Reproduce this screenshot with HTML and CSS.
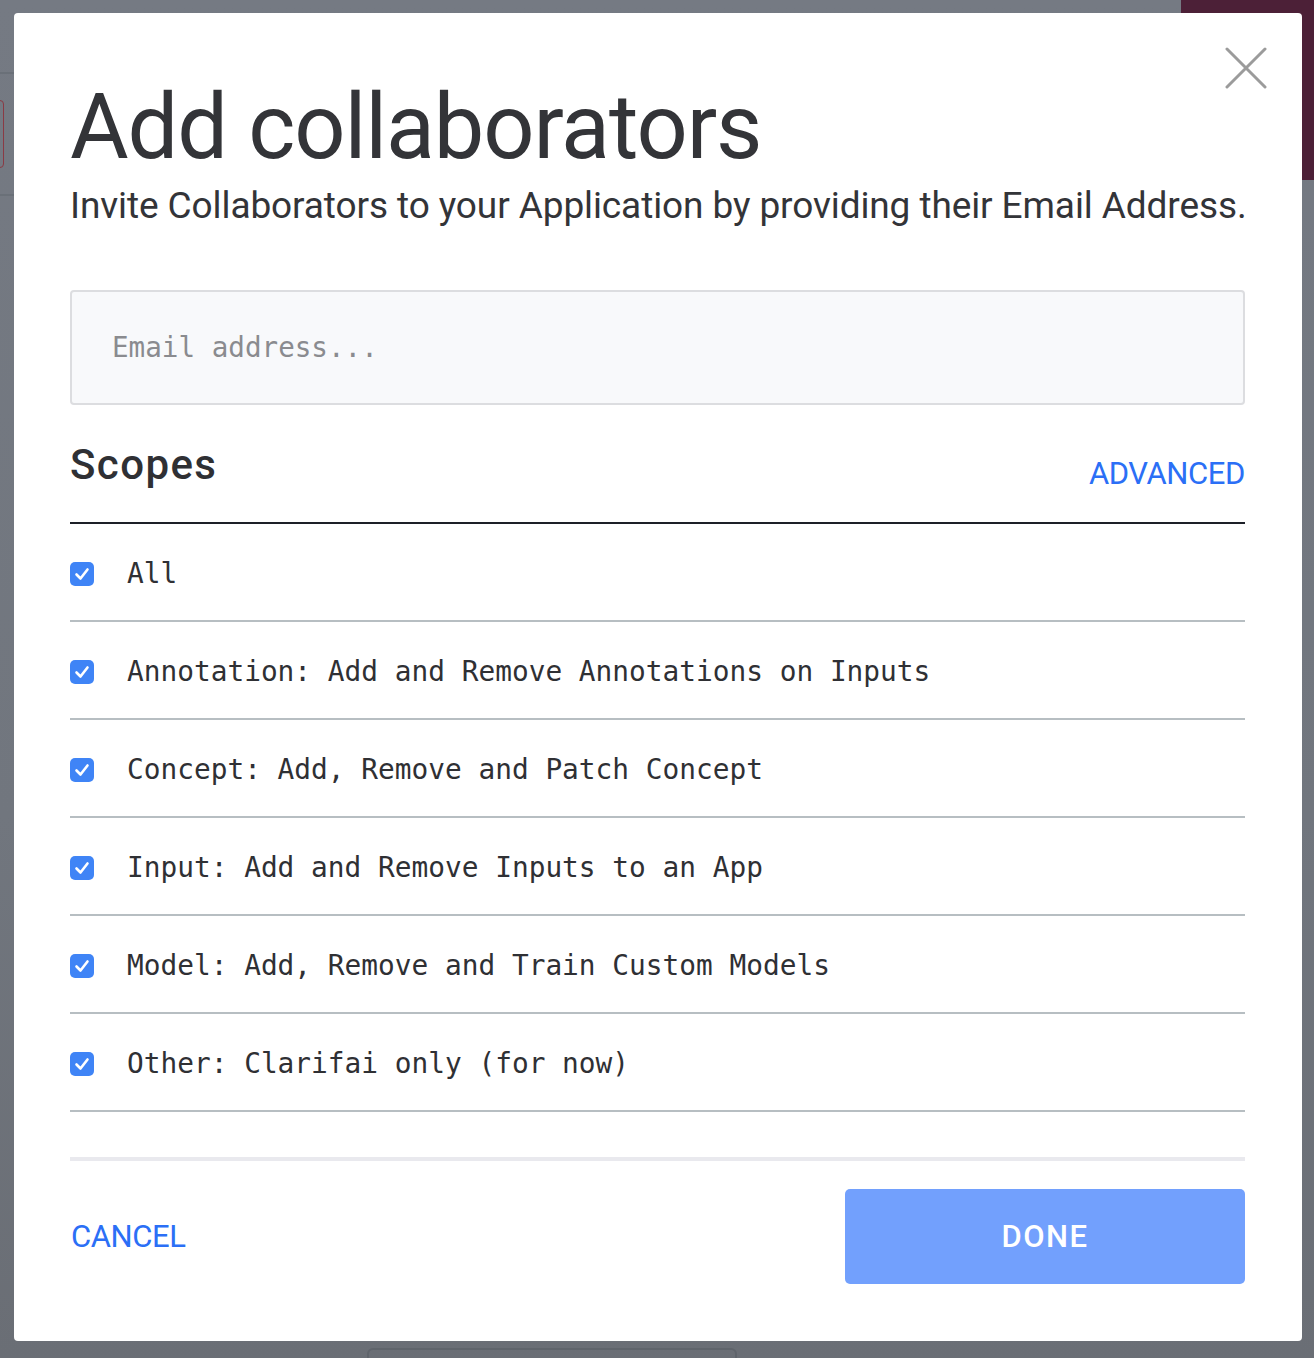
FILE: index.html
```html
<!DOCTYPE html>
<html>
<head>
<meta charset="utf-8">
<link rel="stylesheet" href="styles.css">
</head>
<body>
<div class="backdrop">
  <div class="bg-maroon"></div>
  <div class="bg-line bg-line-1"></div>
  <div class="bg-line bg-line-2"></div>
  <div class="bg-redbox"></div>
  <div class="bg-bottombox"></div>
</div>
<div class="modal">
  <button class="close" aria-label="Close">
    <svg width="42" height="42" viewBox="0 0 42 42"><path d="M2 2 L40 40 M40 2 L2 40" stroke="#9b9b9b" stroke-width="3" stroke-linecap="round" fill="none"/></svg>
  </button>
  <h1 class="title">Add collaborators</h1>
  <p class="subtitle">Invite Collaborators to your Application by providing their Email Address.</p>
  <input class="email" type="text" placeholder="Email address...">
  <div class="scopes-head">
    <h2 class="scopes-title">Scopes</h2>
    <a class="link advanced">ADVANCED</a>
  </div>
  <ul class="scopes">
    <li class="scope"><span class="check"><svg width="24" height="24" viewBox="0 0 24 24"><path d="M6.5 12.5 L10.5 16.5 L17.5 7.5" stroke="#fff" stroke-width="2.6" stroke-linecap="round" stroke-linejoin="round" fill="none"/></svg></span><span class="label">All</span></li>
    <li class="scope"><span class="check"><svg width="24" height="24" viewBox="0 0 24 24"><path d="M6.5 12.5 L10.5 16.5 L17.5 7.5" stroke="#fff" stroke-width="2.6" stroke-linecap="round" stroke-linejoin="round" fill="none"/></svg></span><span class="label">Annotation: Add and Remove Annotations on Inputs</span></li>
    <li class="scope"><span class="check"><svg width="24" height="24" viewBox="0 0 24 24"><path d="M6.5 12.5 L10.5 16.5 L17.5 7.5" stroke="#fff" stroke-width="2.6" stroke-linecap="round" stroke-linejoin="round" fill="none"/></svg></span><span class="label">Concept: Add, Remove and Patch Concept</span></li>
    <li class="scope"><span class="check"><svg width="24" height="24" viewBox="0 0 24 24"><path d="M6.5 12.5 L10.5 16.5 L17.5 7.5" stroke="#fff" stroke-width="2.6" stroke-linecap="round" stroke-linejoin="round" fill="none"/></svg></span><span class="label">Input: Add and Remove Inputs to an App</span></li>
    <li class="scope"><span class="check"><svg width="24" height="24" viewBox="0 0 24 24"><path d="M6.5 12.5 L10.5 16.5 L17.5 7.5" stroke="#fff" stroke-width="2.6" stroke-linecap="round" stroke-linejoin="round" fill="none"/></svg></span><span class="label">Model: Add, Remove and Train Custom Models</span></li>
    <li class="scope"><span class="check"><svg width="24" height="24" viewBox="0 0 24 24"><path d="M6.5 12.5 L10.5 16.5 L17.5 7.5" stroke="#fff" stroke-width="2.6" stroke-linecap="round" stroke-linejoin="round" fill="none"/></svg></span><span class="label">Other: Clarifai only (for now)</span></li>
  </ul>
  <div class="footer-rule"></div>
  <div class="footer">
    <a class="link cancel">CANCEL</a>
    <button class="done">DONE</button>
  </div>
</div>
</body>
</html>
```
FILE: styles.css
```css
html, body {
  margin: 0;
  padding: 0;
}
body {
  background: #72777f;
  width: 1314px;
  height: 1358px;
  overflow: hidden;
  position: relative;
  font-family: Roboto, "Noto Sans", sans-serif;
  color: #323338;
}
.backdrop {
  position: absolute;
  inset: 0;
  background: linear-gradient(180deg, #757a83 0%, #71767e 60%, #6a6e75 100%);
}
.bg-maroon {
  position: absolute;
  left: 1181px;
  top: 0;
  width: 133px;
  height: 180px;
  background: #4c2037;
}
.bg-line {
  position: absolute;
  left: 0;
  width: 14px;
  height: 2px;
  background: #6a7078;
}
.bg-line-1 { top: 72px; }
.bg-line-2 { top: 194px; }
.bg-redbox {
  position: absolute;
  left: -6px;
  top: 100px;
  width: 8px;
  height: 66px;
  border: 1px solid #8a3a44;
  border-radius: 4px;
}
.bg-bottombox {
  position: absolute;
  left: 367px;
  top: 1348px;
  width: 366px;
  height: 30px;
  border: 2px solid #5f646b;
  border-radius: 6px;
}
.modal {
  position: absolute;
  left: 14px;
  top: 13px;
  width: 1288px;
  box-sizing: border-box;
  padding: 70px 57px 57px 56px;
  background: #fff;
  border-radius: 4px;
}
.close {
  position: absolute;
  right: 35px;
  top: 34px;
  width: 42px;
  height: 42px;
  padding: 0;
  border: 0;
  background: none;
}
.close svg { display: block; }
.title {
  margin: 0;
  font-family: Roboto, sans-serif;
  font-weight: 400;
  font-size: 90px;
  line-height: 90px;
  color: #333438;
  letter-spacing: -1.1px;
  white-space: nowrap;
}
.subtitle {
  margin: 14px 0 0;
  font-size: 37px;
  line-height: 37px;
  color: #333438;
  letter-spacing: -0.1px;
  white-space: nowrap;
}
.email {
  display: block;
  box-sizing: border-box;
  width: 100%;
  height: 115px;
  margin: 66px 0 0;
  padding: 0 40px;
  background: #f8f9fb;
  border: 2px solid #dcdde0;
  border-radius: 4px;
  font-family: "DejaVu Sans Mono", monospace;
  font-size: 27.6px;
  color: #333;
  outline: none;
}
.email::placeholder {
  color: #8a8b8f;
}
.scopes-head {
  display: flex;
  justify-content: space-between;
  align-items: flex-end;
  margin-top: 39px;
  padding-bottom: 36px;
  border-bottom: 2px solid #1d2028;
}
.scopes-title {
  margin: 0;
  font-size: 42px;
  line-height: 42px;
  font-weight: 500;
  color: #2f3034;
  letter-spacing: 1.4px;
}
.link {
  color: #2b6ff6;
  font-size: 31px;
  line-height: 31px;
  letter-spacing: -0.4px;
  cursor: pointer;
}
.advanced {
  margin-bottom: -3px;
}
.scopes {
  list-style: none;
  margin: 0;
  padding: 0;
}
.scope {
  display: flex;
  align-items: center;
  height: 93px;
  padding-top: 3px;
  border-bottom: 2px solid #b7bec2;
}
.check {
  display: block;
  width: 24px;
  height: 24px;
  border-radius: 5px;
  background: #3f84f6;
  flex: none;
}
.check svg { display: block; }
.label {
  margin-left: 33px;
  font-family: "DejaVu Sans Mono", monospace;
  font-size: 27.8px;
  color: #2f3034;
}
.footer-rule {
  height: 4px;
  margin-top: 45px;
  background: #e9e9ee;
}
.footer {
  display: flex;
  justify-content: space-between;
  align-items: center;
  margin-top: 28px;
}
.cancel {
  margin-left: 1px;
}
.done {
  width: 400px;
  height: 95px;
  border: 0;
  border-radius: 5px;
  background: #72a0fd;
  color: #fff;
  font-family: Roboto, sans-serif;
  font-weight: 500;
  font-size: 31px;
  letter-spacing: 1.5px;
  cursor: pointer;
}
```
